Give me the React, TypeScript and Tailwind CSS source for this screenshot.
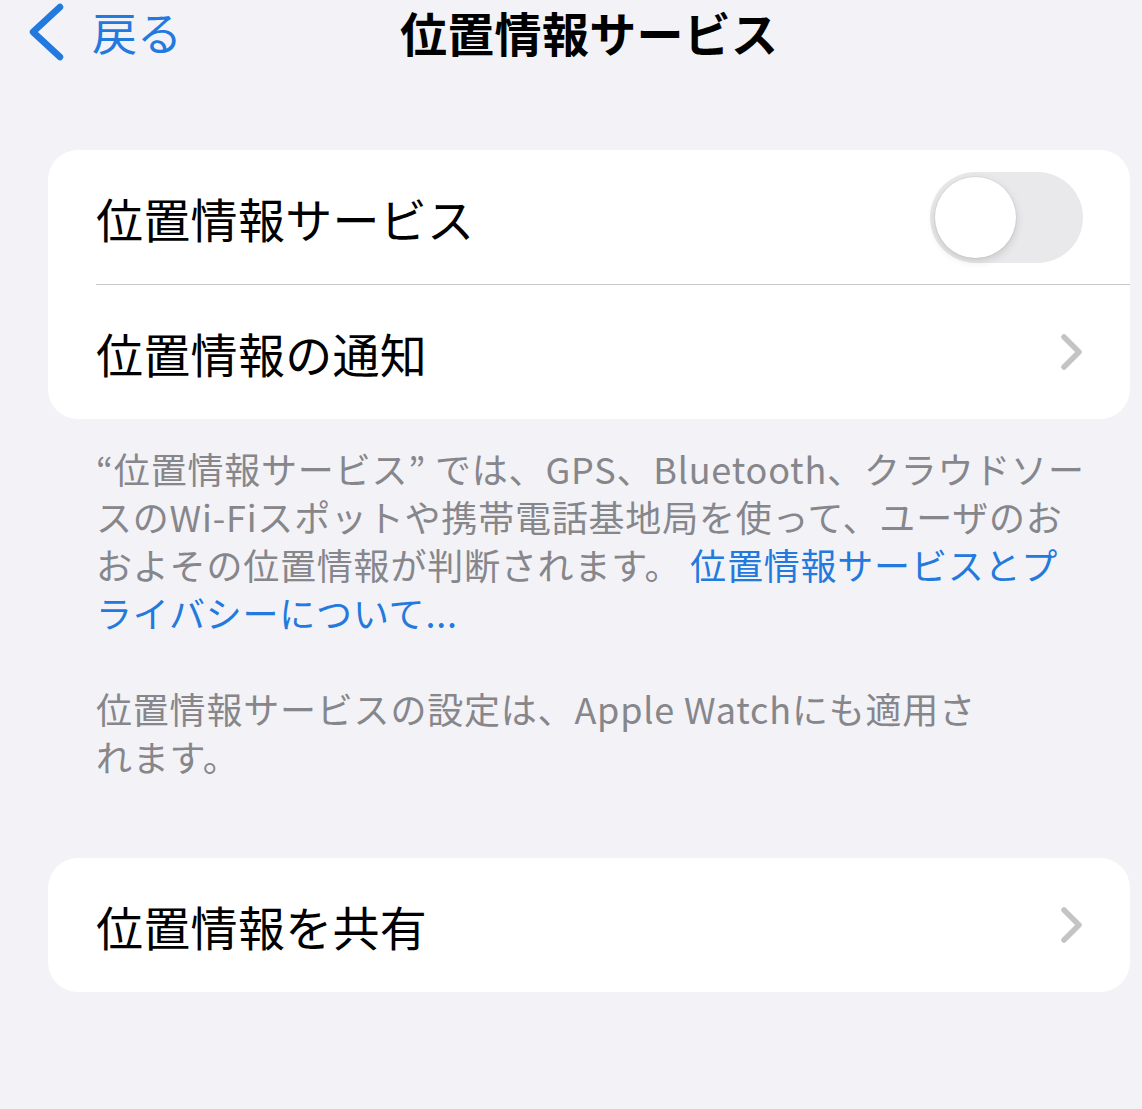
import React from 'react';

const font = { fontFamily: '"Noto Sans CJK JP", "Noto Sans", sans-serif' };

const Chevron: React.FC = () => (
  <svg width="24" height="38" viewBox="0 0 24 38" fill="none" className="shrink-0">
    <path d="M4 4 L19 19 L4 34" stroke="#c4c4c7" strokeWidth="5.5" strokeLinecap="round" strokeLinejoin="round" />
  </svg>
);

const Toggle: React.FC = () => (
  <div className="w-[153px] h-[91px] rounded-full bg-[#e9e9eb] p-[5px] flex items-center">
    <div className="w-[81px] h-[81px] rounded-full bg-white shadow-[0_3px_8px_rgba(0,0,0,0.15),0_0_0_1px_rgba(0,0,0,0.04)]" />
  </div>
);

export default function App() {
  return (
    <div className="min-h-[1109px] bg-[#f2f2f7] pb-10" style={font}>
      {/* Nav bar */}
      <div className="h-[64px] flex items-center pl-[28px]">
        <button className="flex items-center gap-[26px] text-[#2279de]">
          <svg width="38" height="58" viewBox="0 0 38 58" fill="none">
            <path d="M32 4 L5 29 L32 54" stroke="#2279de" strokeWidth="6.5" strokeLinecap="round" strokeLinejoin="round" />
          </svg>
          <span className="text-[45px] leading-[58px]">戻る</span>
        </button>
        <h1 className="ml-[218px] text-[47px] tracking-[0.3px] font-bold leading-[60px] text-black">位置情報サービス</h1>
      </div>

      {/* Card 1 */}
      <div className="mt-[86px] ml-[48px] mr-[12px] bg-white rounded-[30px] overflow-hidden">
        <div className="h-[134px] flex items-center justify-between pl-[48px] pr-[47px]">
          <span className="text-[47px] tracking-[0.3px] text-black leading-none">位置情報サービス</span>
          <Toggle />
        </div>
        <div className="ml-[48px] h-px bg-[#c8c8cc]" />
        <div className="h-[134px] flex items-center justify-between pl-[48px] pr-[46px]">
          <span className="text-[47px] tracking-[0.3px] text-black leading-none">位置情報の通知</span>
          <Chevron />
        </div>
      </div>

      {/* Footers */}
      <div className="pt-[25px] pl-[96px] pr-[20px] text-[36px] tracking-[0.8px] leading-[48px] text-[#86868b]">
        <p>
          <span className="block whitespace-nowrap">“位置情報サービス” では、GPS、Bluetooth、クラウドソー</span>
          <span className="block whitespace-nowrap">スのWi-Fiスポットや携帯電話基地局を使って、ユーザのお</span>
          <span className="block whitespace-nowrap">
            およその位置情報が判断されます。 <span className="text-[#2279de]">位置情報サービスとプ</span>
          </span>
          <span className="block whitespace-nowrap text-[#2279de]">ライバシーについて...</span>
        </p>
        <p className="mt-[48px]">
          <span className="block whitespace-nowrap">位置情報サービスの設定は、Apple Watchにも適用さ</span>
          <span className="block whitespace-nowrap">れます。</span>
        </p>
      </div>

      {/* Card 2 */}
      <div className="mt-[78px] ml-[48px] mr-[12px] bg-white rounded-[30px] overflow-hidden">
        <div className="h-[134px] flex items-center justify-between pl-[48px] pr-[46px]">
          <span className="text-[47px] tracking-[0.3px] text-black leading-none">位置情報を共有</span>
          <Chevron />
        </div>
      </div>
    </div>
  );
}
